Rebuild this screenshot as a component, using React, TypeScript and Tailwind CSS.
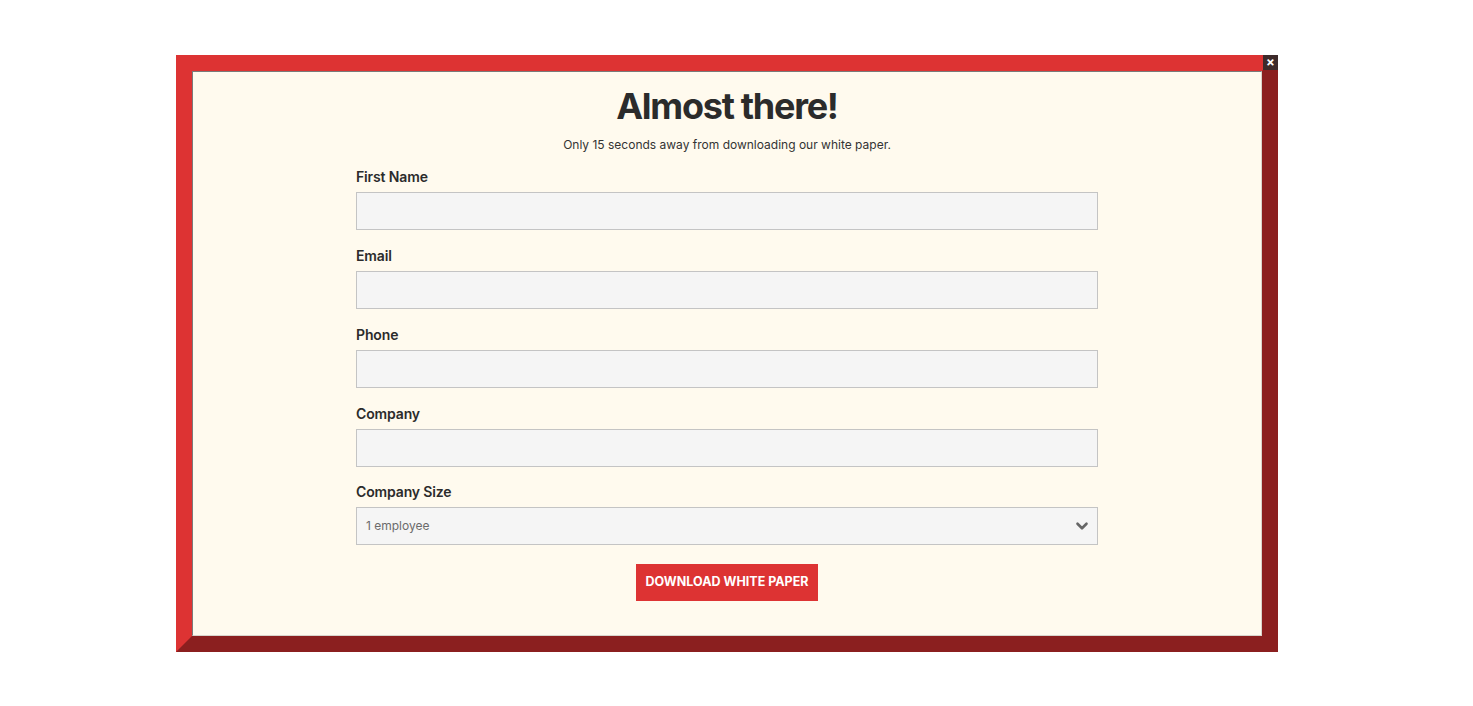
import { ChevronDown } from 'lucide-react';

const FIELDS = ['First Name', 'Email', 'Phone', 'Company'];

export default function App() {
  return (
    <div className="min-h-[706px] bg-white pl-[176px] pt-[55px] font-['Inter',sans-serif] text-[#2b2b2b]">
      <div className="relative w-[1102px] border-[16px] border-b-[#8b1f1f] border-l-[#dd3333] border-r-[#8b1f1f] border-t-[#dd3333]">
        <button className="absolute -right-[16px] -top-[16px] flex h-[15px] w-[15px] items-center justify-center bg-[#3d2a2a] text-[13px] font-bold leading-none text-white">
          ×
        </button>

        <div className="border border-b-[#d8d4cc] border-l-[#7a7a7a] border-r-[#d8d4cc] border-t-[#7a7a7a] bg-[#fffaee] px-4 pb-[34px] pt-[16px]">
          <h1 className="text-center text-[36px] font-bold leading-none tracking-[-0.035em]">Almost there!</h1>
          <p className="mt-[11px] text-center text-[12px] leading-5 text-[#333]">
            Only 15 seconds away from downloading our white paper.
          </p>

          <form className="mx-auto mt-[12px] flex w-[742px] flex-col">
            {FIELDS.map((label, i) => (
              <div key={label} className={i === FIELDS.length - 1 ? 'mb-[15px] flex flex-col' : 'mb-4 flex flex-col'}>
                <label className="text-[14px] font-semibold leading-5 tracking-[-0.01em]">{label}</label>
                <input className="mt-[5px] h-[38px] border border-[#c4c4c4] bg-[#f5f5f5] px-2 outline-none" />
              </div>
            ))}

            {/* Company size */}
            <div className="flex flex-col">
              <label className="text-[14px] font-semibold leading-5 tracking-[-0.01em]">Company Size</label>
              <div className="relative mt-[5px] flex h-[38px] items-center border border-[#c4c4c4] bg-[#f5f5f5] pl-[9px]">
                <span className="text-[12px] text-[#6b6b6b]">1 employee</span>
                <ChevronDown className="absolute right-[6px] top-[9px] h-[18px] w-[18px] text-[#666]" strokeWidth={3.5} />
              </div>
            </div>

            <div className="mt-[19px] flex justify-center">
              <button
                type="button"
                className="h-[37px] w-[182px] bg-[#dd3333] text-[12.5px] font-bold uppercase text-white"
              >
                Download White Paper
              </button>
            </div>
          </form>
        </div>
      </div>
    </div>
  );
}
